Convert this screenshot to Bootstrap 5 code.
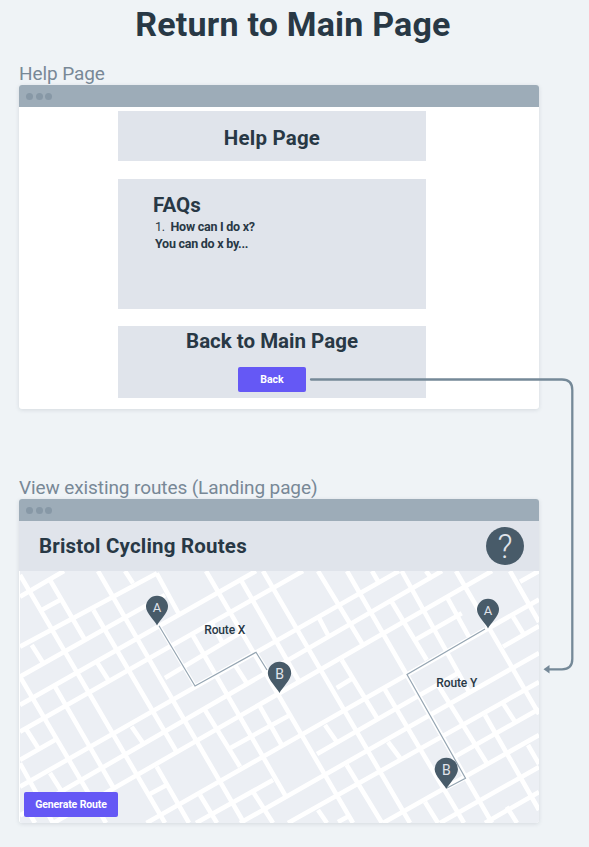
<!DOCTYPE html>
<html lang="en">
<head>
<meta charset="utf-8">
<meta name="viewport" content="width=device-width, initial-scale=1">
<title>Return to Main Page</title>
<link href="https://cdn.jsdelivr.net/npm/bootstrap@5.3.0/dist/css/bootstrap.min.css" rel="stylesheet">
<style>
body{background:#eff3f6;color:#283845;font-family:Roboto,"Liberation Sans",sans-serif;width:589px;height:847px;overflow:hidden}
.board{height:847px;padding:0 50px 0 19px}
.title{font-size:34px;line-height:40px;padding-top:4px;height:62px;margin-right:-16px;margin-left:12px;letter-spacing:.2px}
.caption{color:#788896;font-size:19px;line-height:23px;height:23px;letter-spacing:-.1px}
.frame{height:324px;background:#fff;border-radius:3px;box-shadow:0 1px 4px rgba(40,56,69,.13);overflow:hidden}
.second{margin-top:67px}
.chrome{height:22px;background:#9dacb8;padding-left:7px;gap:2.5px}
.chrome i{width:7px;height:7px;border-radius:50%;background:#8798a6}
.panel{width:308px;background:#e0e4eb;margin-right:14px}
.p-head{height:50px;margin-top:4px}
.p-head .heading{letter-spacing:.2px}
.p-faq{height:130px;margin-top:18px;padding:14px 0 0 35px}
.p-back{height:72px;margin-top:17px;padding-top:3px}
.heading{font-size:20.5px;line-height:24px;font-weight:700;margin:0}
.apphead .heading{letter-spacing:.2px}
.faq{font-size:12.5px;line-height:17px;padding-left:2px;letter-spacing:-.25px;position:relative;top:1px}
.btn-wire{background:#6558f5;color:#fff;border:0;border-radius:2px;font-size:10.5px;line-height:25px;height:25px;padding:0;font-weight:700}
.btn-back{width:68px;margin-top:14px}
.btn-gen{width:94px;left:5px;bottom:6px;letter-spacing:-.12px}
.apphead{height:50px;background:#e0e4eb;padding:0 15px 0 20px}
.help{width:38px;height:38px;border-radius:50%;background:#485b69;color:#e0e4eb;font-size:33px;line-height:40px;font-weight:300}
.mapbox{height:252px;padding-left:1px}
.link-line{left:0;top:0;pointer-events:none}
svg text{font-family:Roboto,"Liberation Sans",sans-serif}
</style>
<script src="https://cdn.jsdelivr.net/npm/bootstrap@5.3.0/dist/js/bootstrap.bundle.min.js"></script>
</head>
<body class="position-relative">
<main class="board">
  <h1 class="title fw-bold text-center mb-0">Return to Main Page</h1>
  <div class="caption">Help Page</div>
  <section class="frame">
    <div class="chrome d-flex align-items-center"><i></i><i></i><i></i></div>
    <div class="d-flex flex-column align-items-center">
      <div class="panel p-head d-flex align-items-center justify-content-center"><h2 class="heading pt-1">Help Page</h2></div>
      <div class="panel p-faq">
        <h2 class="heading">FAQs</h2>
        <div class="faq">1.&nbsp; <b>How can I do x?</b></div>
        <div class="faq"><b>You can do x by...</b></div>
      </div>
      <div class="panel p-back d-flex flex-column align-items-center">
        <h2 class="heading">Back to Main Page</h2>
        <button class="btn btn-wire btn-back">Back</button>
      </div>
    </div>
  </section>
  <div class="caption second">View existing routes (Landing page)</div>
  <section class="frame">
    <div class="chrome d-flex align-items-center"><i></i><i></i><i></i></div>
    <div class="apphead d-flex align-items-center justify-content-between">
      <h2 class="heading">Bristol Cycling Routes</h2>
      <div class="help text-center">?</div>
    </div>
    <div class="mapbox position-relative">
      <svg class="d-block" width="519" height="252" viewBox="0 0 519 252">
        <rect width="519" height="252" fill="#eceff4"/>
        <g stroke="#fff" stroke-width="4.6" fill="none">
          <path d="M0 25.7L44 0M0 75.7L137 2.3M21.7 39L40 29M0 105.7L145 24M0 134L236 0M0 160.7L283 0M145 107L225 59M0 215.7L379 0M0 189L38 167.3M0 244.4L422 0M33.5 252L472 0M128 224L146.7 214M210 177.3L270 144M126.5 252L519 28.5M316.7 117L333 107M395 69L441.7 42.3M500 10.7L519 0M220 252L519 82M176 252L253 209M297 183L440 101M268 252L519 111M436 185L519 138M318 251L329 245M363 252L519 164M420 252L519 196M465 252L519 221M483 75.7L519 55"/>
          <path d="M0 4L145 252M30 9L65 69M78 0L224 252M73.3 39L156.7 181M105 0L113 12.3M136.7 2.3L158.3 42M11.7 74L23.3 92.3M0 105.7L86 252M35 115.7L93 216M76.7 90.7L88.3 109M172 63L267 227.3M6.7 159L18.3 177.3M0 192.3L33 252M8 240L15 252M30 202L42 221M111.7 155.7L123 172M136.7 195.7L169 252M185 139L220 195.7M240 135.7L261.7 174M186 0L333 252M220 7.3L278.3 109M243 0L390 252M298 0L343 74M298.3 45.7L308 64M327 0L472 252M352 0L359 12M381.7 0L449 121M371.7 30.7L406.7 89M406 0L412 8M436 0L519 143M426.7 25.7L449 66M490 0L519 51M493 45.7L503 62M364 117L444 252M418 114L466.7 192M465 114L465 114M465 144L519 239M483 132.3L495 150.7M508 174L519 193M405 231L418 252M486.7 235.7L497 252M368 171L380 187M326.7 194L362 252M305 154L316.7 170.7M321.7 89L357 147M180 224L197 252M233 220.7L253 252M298 239L307 252M215 94L226.7 112M191.7 52L202 71"/>
        </g>
        <g fill="none" stroke="#fff" stroke-width="3.5"><path d="M139 54.7L175 115L236 81.3L247 99"/><path d="M465 58L387 103.5L445.5 207.3L427 217"/></g>
        <g fill="none" stroke="#95a5b2" stroke-width="1.2"><path d="M139 54.7L175 115L236 81.3L247 99"/><path d="M465 58L387 103.5L445.5 207.3L427 217"/></g>
        <defs>
          <path id="pin" d="M0 18.5C-2 14-11 6-11-.2A11 11 0 0 1 11-.2C11 6 2 14 0 18.5Z" fill="#485b69"/>
        </defs>
        <use href="#pin" x="137" y="36"/><use href="#pin" x="468" y="39"/>
        <use href="#pin" transform="translate(259.5 102.5) scale(1.06)"/><use href="#pin" transform="translate(426.3 198.5) scale(1.06)"/>
        <g fill="#e0e4eb" text-anchor="middle" font-size="13">
          <text x="137" y="41">A</text><text x="468" y="44">A</text>
          <text x="259.5" y="107.5" font-size="14">B</text><text x="426.3" y="203.5" font-size="14">B</text>
        </g>
        <g fill="#283845" font-size="12" font-weight="500">
          <text x="184.3" y="62.7" textLength="41">Route X</text><text x="416.3" y="115.7" textLength="41">Route Y</text>
        </g>
      </svg>
      <button class="btn btn-wire btn-gen position-absolute">Generate Route</button>
    </div>
  </section>
</main>
<svg class="link-line position-absolute" width="589" height="847" viewBox="0 0 589 847">
  <path d="M311 379.5H562Q572.3 379.5 572.3 390V659Q572.3 669.3 562 669.3H548" fill="none" stroke="#758998" stroke-width="2.3" stroke-linecap="round"/>
  <path d="M543.5 669.3L549.5 665V673.6Z" fill="#758998"/>
</svg>
</body>
</html>
